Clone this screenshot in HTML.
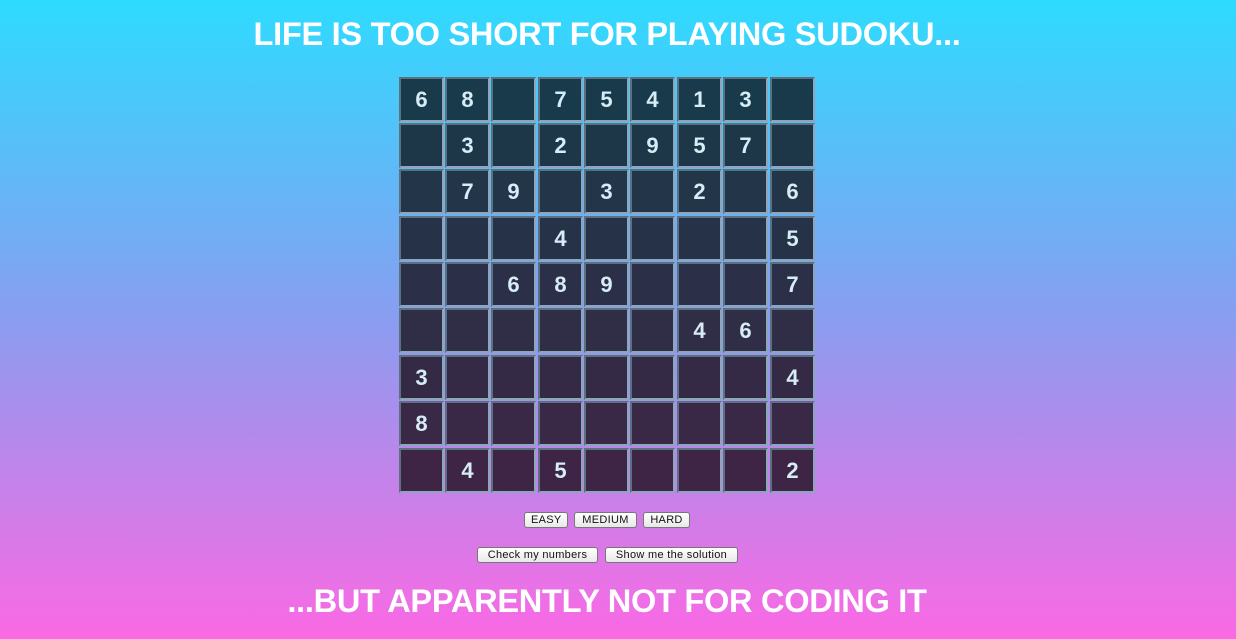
<!DOCTYPE html>
<html><head><style>
html,body{margin:0;padding:0}
body{width:1236px;height:639px;overflow:hidden;position:relative;font-family:"Liberation Sans",Arial,sans-serif;background:linear-gradient(to bottom,#2edbff 0%,#8a9df0 50%,#fb69e4 100%)}
h1{position:absolute;left:0;width:1214px;text-align:center;margin:0;color:#fff;font-size:32.6px;font-weight:bold;letter-spacing:-0.3px}
.c{position:absolute;width:41px;height:41px;border:2px solid;border-color:#5a7180 #8da6bb #8da6bb #5a7180;color:#d6ecf7;font-size:22px;font-weight:bold;text-align:center;line-height:41px;box-sizing:content-box}
.b{position:absolute;font-size:11px;letter-spacing:0.3px;background:linear-gradient(#fff,#e8e8e8);border:1px solid #777;border-radius:3px;height:14px;line-height:14px;padding:0 7px;color:#111;box-sizing:content-box;text-align:center}
</style></head><body>
<h1 style="top:15px">LIFE IS TOO SHORT FOR PLAYING SUDOKU...</h1>
<div id="g"></div>
<div class="b" style="left:524px;top:512px;width:30px;padding:0 6px">EASY</div>
<div class="b" style="left:574px;top:512px;width:49px;padding:0 6px">MEDIUM</div>
<div class="b" style="left:643px;top:512px;width:33px;padding:0 6px">HARD</div>
<div class="b" style="left:477px;top:547px;width:107px;padding:0 6px">Check my numbers</div>
<div class="b" style="left:605px;top:547px;width:119px;padding:0 6px">Show me the solution</div>
<h1 style="top:582px">...BUT APPARENTLY NOT FOR CODING IT</h1>
<script>
var xs=[399,445,491,538,584,630,677,723,770],ys=[77,123,169,216,262,308,355,401,448];
var G=[
"68.75413.",
".3.2.957.",
".79.3.2.6",
"...4....5",
"..689...7",
"......46.",
"3.......4",
"8........",
".4.5....2"];
var h='';
for(var r=0;r<9;r++){var t=r/8;
var col='rgb('+Math.round(24+t*(62-24))+','+Math.round(58+t*(37-58))+','+Math.round(74+t*(69-74))+')';
for(var c=0;c<9;c++){var ch=G[r][c];h+='<div class="c" style="left:'+xs[c]+'px;top:'+ys[r]+'px;background:'+col+'">'+(ch=='.'?'':ch)+'</div>';}}
document.getElementById('g').innerHTML=h;
</script>
</body></html>
